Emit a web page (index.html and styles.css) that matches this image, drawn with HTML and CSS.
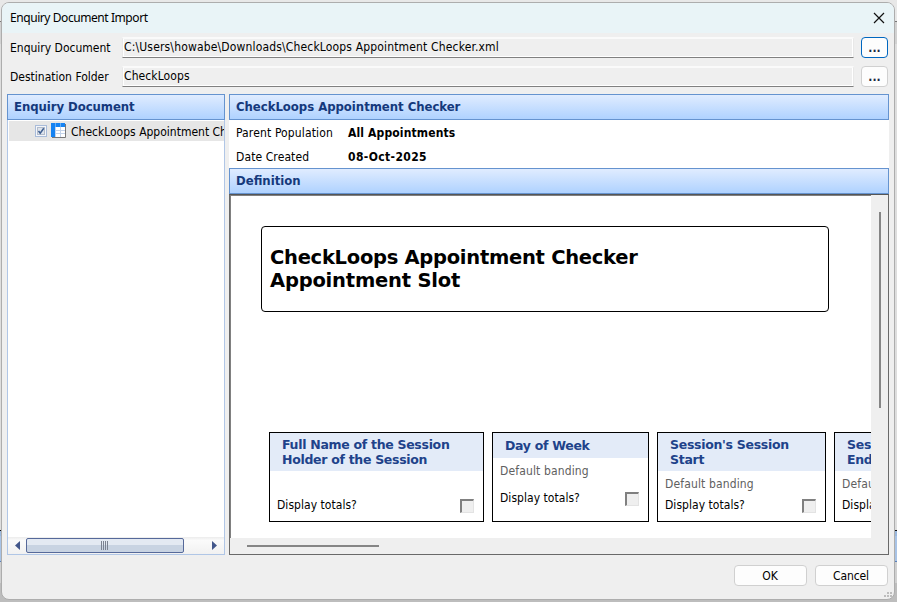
FILE: index.html
```html
<!DOCTYPE html>
<html lang="en">
<head>
<meta charset="utf-8">
<title>Enquiry Document Import</title>
<link rel="stylesheet" href="styles.css">
</head>
<body>
<div class="dialog">
  <div class="titlebar">
    <span class="caption">Enquiry Document Import</span>
    <svg class="close" width="12" height="12" viewBox="0 0 12 12"><path d="M1 1L11 11M11 1L1 11" stroke="#111" stroke-width="1.2" fill="none"/></svg>
  </div>
  <div class="body">
    <div class="field">
      <span class="label l1">Enquiry Document</span>
      <div class="input"><span class="path">C:\Users\howabe\Downloads\CheckLoops Appointment Checker.xml</span></div>
      <button class="browse focused">...</button>
    </div>
    <div class="field">
      <span class="label l2">Destination Folder</span>
      <div class="input"><span class="dest">CheckLoops</span></div>
      <button class="browse">...</button>
    </div>
    <div class="panels">
      <div class="tree">
        <div class="head"><span class="h1">Enquiry Document</span></div>
        <div class="treebody">
          <div class="node">
            <svg class="check" width="12" height="12" viewBox="0 0 12 12"><rect x=".5" y=".5" width="11" height="11" fill="#f4f6fa" stroke="#a9bcda"/><rect x="2.5" y="2.5" width="7" height="7" fill="#dde3ec" stroke="#b3bccb"/><path d="M3.5 6L5.2 8.2L8.8 3.2" fill="none" stroke="#3f5f91" stroke-width="1.5"/></svg>
            <svg class="sheet" width="16" height="16" viewBox="0 0 16 16"><path d="M1 14.5H14.5V1" fill="none" stroke="#777"/><rect width="14" height="14" fill="#fff"/><path d="M0 0H4V14H0ZM4 0H14V4H4Z" fill="#1683f2"/><path d="M4.5 4V14M9.5 4V14M4 7.5H14M4 10.5H14" stroke="#c3d3ea" fill="none"/><path d="M4.5 0V4M9.5 0V4" stroke="#63aef7" fill="none"/></svg>
            <span class="nodename">CheckLoops Appointment Checker</span>
          </div>
          <div class="hbar">
            <svg width="5" height="9" viewBox="0 0 5 9"><path d="M5 0V9L0 4.5Z" fill="#43578b"/></svg>
            <div class="thumb"><i></i><i></i><i></i><i></i></div>
            <svg class="rarrow" width="5" height="9" viewBox="0 0 5 9"><path d="M0 0V9L5 4.5Z" fill="#43578b"/></svg>
          </div>
        </div>
      </div>
      <div class="detail">
        <div class="head"><span class="h2">CheckLoops Appointment Checker</span></div>
        <div class="info">
          <span class="k1">Parent Population</span><b class="v1">All Appointments</b>
          <span class="k2">Date Created</span><b class="v2">08-Oct-2025</b>
        </div>
        <div class="head"><span class="h3">Definition</span></div>
        <div class="report">
          <div class="page">
            <div class="banner"><div class="b1">CheckLoops Appointment Checker</div><div class="b2">Appointment Slot</div></div>
            <div class="cards">
              <div class="card w1"><div class="cardhead"><span class="c1">Full Name of the Session</span><span class="c2">Holder of the Session</span></div><div class="banding"></div><div class="totals"><span>Display totals?</span><i class="box"></i></div></div>
              <div class="card w2"><div class="cardhead single"><span class="c3">Day of Week</span></div><div class="banding">Default banding</div><div class="totals"><span>Display totals?</span><i class="box"></i></div></div>
              <div class="card w3"><div class="cardhead"><span class="c4">Session's Session</span><span class="c5">Start</span></div><div class="banding">Default banding</div><div class="totals"><span>Display totals?</span><i class="box"></i></div></div>
              <div class="card w3"><div class="cardhead"><span class="c4">Session's Session</span><span class="c5">End</span></div><div class="banding">Default banding</div><div class="totals"><span>Display totals?</span><i class="box"></i></div></div>
            </div>
          </div>
          <div class="vscroll"></div>
          <div class="hscroll"></div>
        </div>
      </div>
    </div>
    <div class="actions"><button>OK</button><button>Cancel</button></div>
  </div>
  <svg class="grip" width="9" height="5" viewBox="0 0 9 5"><path d="M3 0h2v2h-2zM6 0h2v2h-2zM0 3h2v2h-2zM3 3h2v2h-2zM6 3h2v2h-2z" fill="#bdbdbd"/></svg>
</div>
</body>
</html>
```
FILE: styles.css
```css
* { box-sizing: border-box; }
body {
  margin: 0; padding: 2px 2px 2px 1px; width: 897px; height: 602px; overflow: hidden;
  background: linear-gradient(#e8e8e8 0 21px, #777 21px 22px, #d2d2d2 22px 44px, #dedede 44px 530px, #111 530px 531px, #9ab8de 531px 536px, #a8c3e6 536px 561px, #5b80b8 561px 562px, #d0d0d0 562px 583px, #bdbdbd 583px);
  font: 12px/16px "DejaVu Sans Condensed", "DejaVu Sans", sans-serif; font-stretch: condensed; color: #000;
}
.dialog { position: relative; width: 894px; height: 598px; border: 1px solid #adadad; border-radius: 8px; background: #efefef; overflow: hidden; }
.titlebar { height: 30px; background: #e9f4f7; display: flex; align-items: center; justify-content: space-between; padding: 0 9px 0 8px; }
.caption { font-family: "Noto Sans", sans-serif; font-stretch: normal; letter-spacing: -0.43px; }
.body { padding: 4px 5px 0; }
span, b, .b1, .b2 { white-space: nowrap; }
.field { display: flex; height: 21px; margin-bottom: 8px; align-items: center; }
.label { width: 115px; padding-left: 3px; }
.path { letter-spacing: 0.16px; }
.dest { letter-spacing: 0.1px; }
.input { width: 732px; height: 21px; border: 1px solid #e8e8e8; border-top: 2px solid #fafafa; border-bottom: 1px solid #808080; padding: 0 1px; line-height: 16px; box-shadow: inset 0 -1px #fff, inset 1px 0 #fff, inset -1px 0 #fff; }
button { font: inherit; font-stretch: condensed; background: #fdfdfd; border: 1px solid #d0d0d0; border-radius: 4px; padding: 0; }
.browse { width: 27px; height: 21px; margin-left: 7px; font-weight: bold; line-height: 18px; color: #1c2940; }
.browse.focused { border-color: #0067c0; }
.panels { display: flex; gap: 4px; height: 461px; margin-top: -1px; }
.head { height: 26px; border: 1px solid #6593cf; background: linear-gradient(#e0ecff, #afd2ff); color: #15397c; font: bold 13px/24px "DejaVu Sans Condensed", "DejaVu Sans", sans-serif; font-stretch: condensed; padding-left: 6px; }
.h1 { letter-spacing: -0.06px; }
.h2 { letter-spacing: -0.03px; }
.tree { width: 218px; display: flex; flex-direction: column; }
.treebody { flex: 1; background: #fff; border: 1px solid #b0c6e6; border-top: 0; display: flex; flex-direction: column; justify-content: space-between; min-width: 0; }
.node { display: flex; align-items: center; height: 20px; margin: 1px 0 0 1px; background: #e6e6e6; overflow: hidden; padding-left: 26px; }
.node svg { flex: none; }
.nodename { padding-top: 2px; }
.sheet { margin: 0 4px; }
.hbar { height: 17px; display: flex; align-items: center; padding: 0 7px; background: linear-gradient(#ececec, #fbfbfb 20%, #f1f1f1); }
.thumb { width: 158px; height: 15px; margin-left: 6px; border: 1px solid #56699a; border-radius: 2px; background: linear-gradient(#e3e9f2 0 50%, #c8d3e2 50%); display: flex; justify-content: center; align-items: center; gap: 1px; padding-right: 1px; }
.thumb i { width: 1px; height: 9px; background: #7b8291; }
.rarrow { margin-left: auto; }
.detail { width: 660px; display: flex; flex-direction: column; }
.info { background: #fff; height: 48px; display: grid; grid-template: 24px 24px / 112px auto; align-items: center; padding: 1px 0 0 7px; }
.k1 { letter-spacing: 0.14px; }
.k2 { letter-spacing: 0.1px; }
.v1 { letter-spacing: 0.14px; }
.v2 { letter-spacing: 0.38px; }
.report { flex: 1; border: 1px solid #696969; border-top: 1px solid #555; background: #efefef; display: grid; grid-template: 343px 16px / 641px 17px; }
.page { background: #fff; border-left: 1px solid #808080; border-top: 1px solid #808080; overflow: hidden; padding: 30px 0 0 30px; }
.banner { width: 568px; height: 86px; border: 1px solid #000; border-radius: 4px; padding: 19px 8px; font: bold 19.5px/23px "DejaVu Sans", sans-serif; font-stretch: normal; letter-spacing: -0.27px; }
.b2 { letter-spacing: -0.2px; }
.cards { display: flex; gap: 8px; margin: 120px 0 0 8px; }
.card { flex: none; height: 90px; border: 1px solid #000; }
.w1 { width: 215px; }
.w2 { width: 157px; }
.w3 { width: 169px; }
.cardhead { height: 38px; background: #e3ebf8; color: #20428a; font: bold 12.5px/15px "DejaVu Sans", sans-serif; font-stretch: normal; letter-spacing: -0.3px; padding: 4px 0 0 12px; display: flex; flex-direction: column; align-items: flex-start; }
.single { height: 25px; padding-top: 5px; }
.banding { height: 25px; line-height: 25px; padding: 1px 0 0 7px; color: #606060; letter-spacing: 0.14px; }
.totals { display: flex; justify-content: space-between; padding: 1px 9px 0 7px; line-height: 16px; letter-spacing: 0.04px; }
.single ~ .totals { padding-top: 7px; }
.box { width: 14px; height: 14px; margin-top: 2px; border: 2px solid; border-width: 2px 1px 1px 2px; border-color: #808080 #e3e3e3 #e3e3e3 #808080; background: #efefef; }
.vscroll { display: flex; justify-content: flex-start; padding: 17px 0 0 8px; }
.vscroll::before { content: ""; width: 2px; height: 196px; background: #858585; }
.hscroll { padding: 7px 0 0 17px; }
.hscroll::before { content: ""; display: block; width: 132px; height: 2px; background: #858585; }
.actions { display: flex; justify-content: flex-end; gap: 8px; padding: 10px 1px 0 0; }
.actions button { width: 73px; height: 21px; padding-right: 1px; letter-spacing: -0.1px; }
.grip { position: absolute; right: 1px; bottom: 2px; }
```
